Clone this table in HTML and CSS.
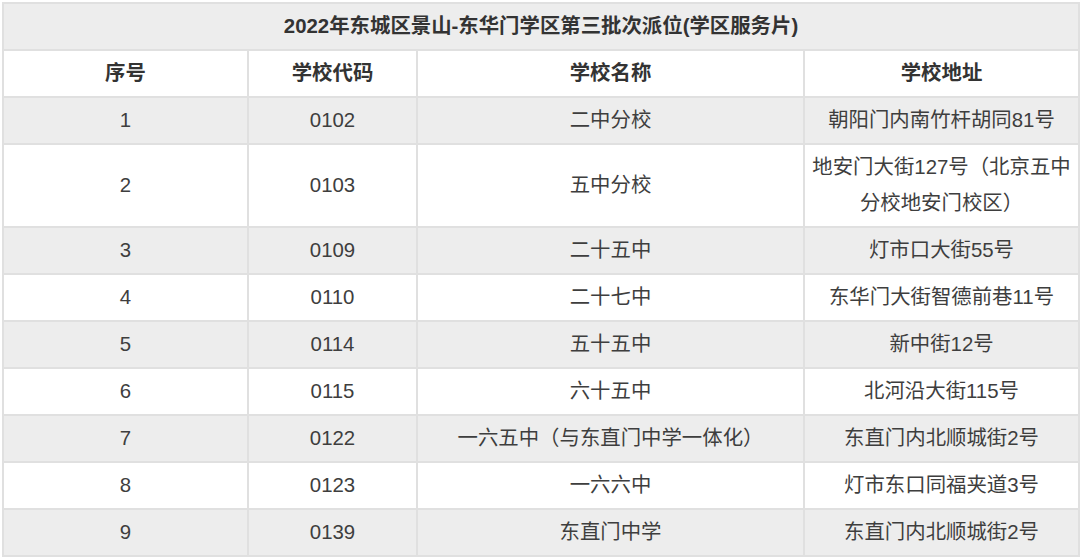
FILE: index.html
```html
<!DOCTYPE html>
<html lang="zh-CN">
<head>
<meta charset="utf-8">
<title>2022年东城区景山-东华门学区第三批次派位</title>
<link rel="stylesheet" href="styles.css">
</head>
<body>
<div class="wrap">
<table class="tbl">
  <colgroup>
    <col class="c1"><col class="c2"><col class="c3"><col class="c4">
  </colgroup>
  <thead>
    <tr class="title"><th colspan="4">2022年东城区景山-东华门学区第三批次派位(学区服务片)</th></tr>
    <tr class="head"><th>序号</th><th>学校代码</th><th>学校名称</th><th>学校地址</th></tr>
  </thead>
  <tbody>
    <tr class="odd"><td>1</td><td>0102</td><td>二中分校</td><td>朝阳门内南竹杆胡同81号</td></tr>
    <tr><td>2</td><td>0103</td><td>五中分校</td><td>地安门大街127号（北京五中<br>分校地安门校区）</td></tr>
    <tr class="odd"><td>3</td><td>0109</td><td>二十五中</td><td>灯市口大街55号</td></tr>
    <tr><td>4</td><td>0110</td><td>二十七中</td><td>东华门大街智德前巷11号</td></tr>
    <tr class="odd"><td>5</td><td>0114</td><td>五十五中</td><td>新中街12号</td></tr>
    <tr><td>6</td><td>0115</td><td>六十五中</td><td>北河沿大街115号</td></tr>
    <tr class="odd"><td>7</td><td>0122</td><td>一六五中（与东直门中学一体化）</td><td>东直门内北顺城街2号</td></tr>
    <tr><td>8</td><td>0123</td><td>一六六中</td><td>灯市东口同福夹道3号</td></tr>
    <tr class="odd"><td>9</td><td>0139</td><td>东直门中学</td><td>东直门内北顺城街2号</td></tr>
  </tbody>
</table>
</div>
</body>
</html>
```

FILE: styles.css
```css
html, body {
  margin: 0;
  padding: 0;
  background: #ffffff;
}

.wrap {
  padding: 2px;
}

.tbl {
  width: 1076px;
  table-layout: fixed;
  border-collapse: collapse;
  font-family: "Liberation Sans", "Noto Sans CJK SC", sans-serif;
  font-size: 20.4px;
  line-height: 36px;
  color: #3e3e3e;
}

.c1 { width: 245px; }
.c2 { width: 169px; }
.c3 { width: 387px; }
.c4 { width: 275px; }

.tbl th,
.tbl td {
  border: 2px solid #e0e0e0;
  padding: 4px 4px 5px;
  text-align: center;
  vertical-align: middle;
}

.tbl th {
  font-weight: bold;
  color: #333333;
}

.title th {
  background: #ededed;
}

.head th {
  background: #ffffff;
}

.tbl tbody tr {
  background: #ffffff;
}

.tbl tbody tr.odd {
  background: #ededed;
}
```
